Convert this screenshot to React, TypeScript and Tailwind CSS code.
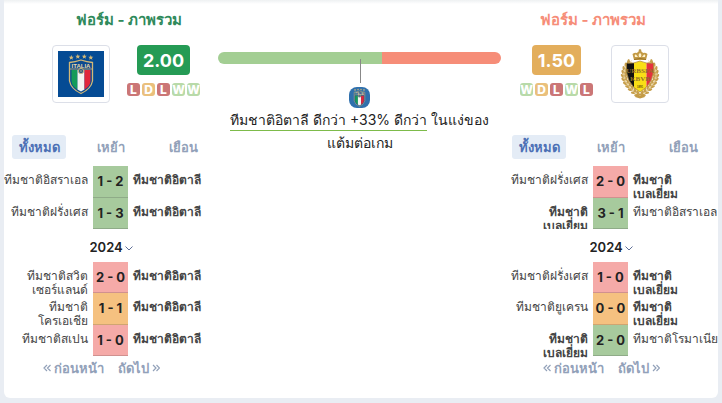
import { useState } from "react";

type Result = "W" | "D" | "L";
type Match = { home: string; away: string; score: string; result: Result; own: "home" | "away" };
type Team = {
  id: string;
  rating: string;
  ratingClass: string;
  titleClass: string;
  form: Result[];
  recent: Match[];
  older: Match[];
};

const ITALY = "ทีมชาติอิตาลี";
const BELGIUM = "ทีมชาติเบลเยี่ยม";

const teams: Record<"italy" | "belgium", Team> = {
  italy: {
    id: "italy",
    rating: "2.00",
    ratingClass: "bg-[#259b55]",
    titleClass: "text-[#2f8a5b]",
    form: ["L", "D", "L", "W", "W"],
    recent: [
      { home: "ทีมชาติอิสราเอล", away: ITALY, score: "1 - 2", result: "W", own: "away" },
      { home: "ทีมชาติฝรั่งเศส", away: ITALY, score: "1 - 3", result: "W", own: "away" },
    ],
    older: [
      { home: "ทีมชาติสวิตเซอร์แลนด์", away: ITALY, score: "2 - 0", result: "L", own: "away" },
      { home: "ทีมชาติโครเอเชีย", away: ITALY, score: "1 - 1", result: "D", own: "away" },
      { home: "ทีมชาติสเปน", away: ITALY, score: "1 - 0", result: "L", own: "away" },
    ],
  },
  belgium: {
    id: "belgium",
    rating: "1.50",
    ratingClass: "bg-[#e3ae5c]",
    titleClass: "text-[#f68d78]",
    form: ["W", "D", "L", "W", "L"],
    recent: [
      { home: "ทีมชาติฝรั่งเศส", away: BELGIUM, score: "2 - 0", result: "L", own: "away" },
      { home: BELGIUM, away: "ทีมชาติอิสราเอล", score: "3 - 1", result: "W", own: "home" },
    ],
    older: [
      { home: "ทีมชาติฝรั่งเศส", away: BELGIUM, score: "1 - 0", result: "L", own: "away" },
      { home: "ทีมชาติยูเครน", away: BELGIUM, score: "0 - 0", result: "D", own: "away" },
      { home: BELGIUM, away: "ทีมชาติโรมาเนีย", score: "2 - 0", result: "W", own: "home" },
    ],
  },
};

const badgeColor: Record<Result, string> = {
  W: "bg-[#b8daa9]",
  D: "bg-[#eac07c]",
  L: "bg-[#cb7676]",
};

const scoreColor: Record<Result, string> = {
  W: "bg-[#a7ca9d] border-[#8fab88]",
  D: "bg-[#f5c180] border-[#d0a571]",
  L: "bg-[#f5aaa8] border-[#d0918f]",
};

function ItalyShield() {
  return (
    <g>
      {[13, 19.5, 26, 32.5].map((x, i) => (
        <path
          key={x}
          transform={`translate(${x + 0.3} ${i === 0 || i === 3 ? 6.5 : 5.5})`}
          d="M0-2.5.7-.8 2.5-.7 1.1.5 1.6 2.3 0 1.2-1.6 2.3-1.1.5-2.5-.7-.7-.8Z"
          fill="#d3b876"
        />
      ))}
      <path d="M11.500 11.500Q17 11 23 9Q29 11 34.500 11.500V30Q33 38 23 42.500Q13 38 11.500 30Z" fill="#0b4a8f" stroke="#d3b876" strokeWidth="1.300" />
      <path d="M13.500 19H19.500V38.500Q14 35.500 13.500 30Z" fill="#159b59" />
      <path d="M19.500 19H26.500V38.500L23 40.500L19.500 38.500Z" fill="#f4f4f1" />
      <path d="M26.500 19H32.500V30Q32 35.500 26.500 38.500Z" fill="#e1263b" />
      <path d="M12 18H34" stroke="#d3b876" strokeWidth=".8" />
      <text x="23" y="17" textAnchor="middle" fontFamily="Liberation Sans, sans-serif" fontSize="6" fontWeight="700" fill="#ead9a8">
        ITALIA
      </text>
      <circle cx="23" cy="20" r="2.600" fill="#0b4a8f" stroke="#d3b876" strokeWidth=".9" />
      <path d="M21.500 20h3M23 18.500v3" stroke="#d3b876" strokeWidth=".6" />
    </g>
  );
}

function ItalyCrest() {
  return (
    <svg viewBox="0 0 46 46" className="size-[46px]" role="img" aria-label={ITALY}>
      <rect width="46" height="46" fill="#054b94" />
      <ItalyShield />
    </svg>
  );
}

const laurel = [
  [13, 13, -50], [10.5, 16, -35], [8.5, 19, -20], [7.5, 22.5, -8], [7, 26, 5], [7.5, 29.5, 15], [9, 33, 28], [11, 36, 38], [13.5, 39, 45], [16.5, 42, 52], [19.5, 44.5, 62],
];

function LaurelBranch() {
  return (
    <g>
      <path d="M13 12Q6 19 7 28Q9 39 23 46" fill="none" stroke="#b98f3d" strokeWidth="1.200" />
      {laurel.map(([x, y, a]) => (
        <g key={y} transform={`translate(${x} ${y}) rotate(${-a})`} fill="#c79f4c">
          <ellipse cx="-1.800" cy="0" rx="1.200" ry="2.400" transform="rotate(-30)" />
          <ellipse cx="1.800" cy="0" rx="1.200" ry="2.400" transform="rotate(30)" />
          <ellipse cx="0" cy="-1" rx=".6" ry="1.600" fill="#ecd9a6" />
        </g>
      ))}
    </g>
  );
}

const BELGIUM_SHIELD = "M9.500 14Q17 15 23 12Q29 15 36.500 14Q38.500 34 23 43Q7.500 34 9.500 14Z";

function BelgiumCrest() {
  return (
    <svg viewBox="0 0 46 50" className="h-[50px] w-[46px]" role="img" aria-label={BELGIUM}>
      <clipPath id="belgium-shield">
        <path d={BELGIUM_SHIELD} />
      </clipPath>
      <LaurelBranch />
      <g transform="translate(46 0) scale(-1 1)">
        <LaurelBranch />
      </g>
      <g clipPath="url(#belgium-shield)">
        <path d="M5 10H17V46H5Z" fill="#111" />
        <path d="M17 10H29.500V46H17Z" fill="#f9df16" />
        <path d="M29.500 10H41V46H29.500Z" fill="#e5313d" />
      </g>
      <path d={BELGIUM_SHIELD} fill="none" stroke="#b28d3b" strokeWidth=".8" />
      <g fontFamily="Liberation Serif, serif" fontWeight="700" textAnchor="middle" fill="#94722a">
        <text x="23" y="24" fontSize="7">URBSFA</text>
        <text x="23" y="32" fontSize="7">KBVB</text>
        <text x="23" y="39" fontSize="3" fill="#59400b">1895</text>
      </g>
      <path d="M17 11L15.500 5Q18 3 20 4Q21 2 23 2Q25 2 26 4Q28 3 30.500 5L29 11Z" fill="#c39a45" />
      <path d="M18 8Q17 5 19 5.500L21 8ZM22 8Q21 5 23 4Q25 5 24 8ZM28 8Q29 5 27 5.500L25 8Z" fill="#fff2cb" />
      <path d="M23 0V3M21.700 1.300H24.300" stroke="#b28d3b" />
      <path d="M17 10.500Q23 8.500 29 10.500" stroke="#8d6820" strokeWidth=".8" fill="none" />
      <path d="M20 45L23 46.500L26 45L28 48L23 49.500L18 48Z" fill="#c39a45" />
    </svg>
  );
}

function MiniItalyCrest() {
  return (
    <svg viewBox="0 0 46 46" className="size-[21px] rounded-lg" aria-hidden="true">
      <rect width="46" height="46" fill="#2f70ad" />
      <ItalyShield />
    </svg>
  );
}

function Chevron() {
  return (
    <svg viewBox="0 0 8 8" className="size-2" fill="none" stroke="#5f6f96" aria-hidden="true">
      <path d="M.5 2.500 4 6 7.500 2.500" />
    </svg>
  );
}

function DoubleChevron({ next = false }: { next?: boolean }) {
  return (
    <svg viewBox="0 0 8 8" className="size-2" fill="none" stroke="currentColor" strokeWidth="1.200" aria-hidden="true">
      <path d={next ? "M1 1 4 4 1 7M4.500 1 7.500 4 4.500 7" : "M4 1 1 4 4 7M7.500 1 4.500 4 7.500 7"} />
    </svg>
  );
}

const wrapped = ["เบลเยี่ยม", "โครเอเชีย", "เซอร์แลนด์"];

function TeamName({ name }: { name: string }) {
  const tail = wrapped.find((w) => name.endsWith(w));
  if (!tail) return <span className="whitespace-nowrap">{name}</span>;
  return (
    <span className="whitespace-nowrap">
      {name.slice(0, -tail.length)}
      <br />
      {tail}
    </span>
  );
}

function MatchTable({ matches, label, className }: { matches: Match[]; label: string; className: string }) {
  return (
    <table
      className={`w-full table-fixed border-separate border-spacing-0 text-xs leading-[14px] text-[#444] ${className}`}
      aria-label={label}
    >
      <colgroup>
        <col className="w-[89px]" />
        <col className="w-[35px]" />
        <col />
      </colgroup>
      <tbody>
        {matches.map((m, i) => (
          <tr key={i} className="align-top">
            <td className={`p-0 pr-[5px] text-right ${m.own === "home" ? "font-bold" : ""}`}>
              <div className="flex h-[31px] justify-end pt-[7px]">
                <TeamName name={m.home} />
              </div>
            </td>
            <td className={`border-b p-0 text-center align-middle text-[13px] font-bold text-[#222] ${scoreColor[m.result]}`}>
              {m.score}
            </td>
            <td className={`p-0 pl-[5px] ${m.own === "away" ? "font-bold" : ""}`}>
              <div className="h-[31px] pt-[7px]">
                <TeamName name={m.away} />
              </div>
            </td>
          </tr>
        ))}
      </tbody>
    </table>
  );
}

const tabs = ["ทั้งหมด", "เหย้า", "เยือน"];

function TeamPanel({ team, crestFirst }: { team: Team; crestFirst: boolean }) {
  const [tab, setTab] = useState(0);
  return (
    <section className="min-w-0">
      <h2 className={`pt-2.5 text-center text-[15px] leading-5 font-bold ${crestFirst ? "pl-9" : "pr-9"} ${team.titleClass}`}>
        ฟอร์ม - ภาพรวม
      </h2>
      <div className={`mt-[15px] flex h-[58px] justify-center ${crestFirst ? "gap-4 pl-[31px]" : "flex-row-reverse gap-[15px] pr-9"}`}>
        <div className="flex size-[58px] shrink-0 items-center justify-center rounded border border-[#dcdfe8] bg-white">
          {crestFirst ? <ItalyCrest /> : <BelgiumCrest />}
        </div>
        <div className={`flex flex-col items-center ${crestFirst ? "w-[75px]" : "w-[78px]"}`}>
          <div className={`flex h-[30px] items-center rounded px-1.5 text-[18px] font-bold text-white ${team.ratingClass}`}>
            {team.rating}
          </div>
          <div className="mt-2 flex gap-0.5">
            {team.form.map((r, i) => (
              <span key={i} className={`flex size-[13px] items-center justify-center rounded-[3px] text-xs leading-3 font-extrabold text-white ${badgeColor[r]}`}>
                {r}
              </span>
            ))}
          </div>
        </div>
      </div>
      <div role="tablist" className="mt-8 grid grid-cols-3 px-2 text-[13px] leading-6 font-bold">
        {tabs.map((t, i) => (
          <button
            key={t}
            role="tab"
            aria-selected={tab === i}
            onClick={() => setTab(i)}
            className={`h-6 w-[54px] rounded-[3px] ${i === 1 ? "justify-self-center" : i === 2 ? "justify-self-end" : ""} ${tab === i ? "bg-[#e4ecf6] text-[#4c70b5]" : "text-[#92a1b9]"}`}
          >
            {t}
          </button>
        ))}
      </div>
      <div className="mt-[7px] overflow-hidden">
        <MatchTable matches={team.recent} label="2025" className="h-[63px]" />
      </div>
      <div className="flex h-[33px] items-center justify-center gap-px pt-1">
        <select aria-label="2024" className="appearance-none bg-transparent text-[13px] font-semibold text-[#222]">
          <option>2024</option>
        </select>
        <Chevron />
      </div>
      <MatchTable matches={team.older} label="2024" className="h-[94px]" />
      <nav className="flex justify-center gap-3.5 pt-0.5 pr-5 text-[13px] leading-5 font-bold text-[#92a1b9]">
        <button className="flex items-center gap-[3px]">
          <DoubleChevron />
          ก่อนหน้า
        </button>
        <button className="flex items-center gap-[3px]">
          ถัดไป
          <DoubleChevron next />
        </button>
      </nav>
    </section>
  );
}

export default function App() {
  return (
    <div className="bg-[#e9edf3] px-1 pb-[5px] font-[Inter,'Noto_Sans',sans-serif]">
      <main className="grid grid-cols-[214fr_286fr_214fr] rounded-b-md bg-white bg-linear-to-b from-[#eef1f2] to-white to-1% pb-5">
        <TeamPanel team={teams.italy} crestFirst />
        <section className="pt-[52px] pr-[3px]">
          <div className="relative flex h-3">
            <div className="w-[58%] rounded-l-md bg-[#a3ce93]" />
            <div className="flex-1 rounded-r-md bg-[#f68d78]" />
            <div className="absolute top-[7px] left-1/2 h-6 w-px bg-[#888]" />
          </div>
          <div className="mt-[23px] flex justify-center">
            <MiniItalyCrest />
          </div>
          <p className="text-center text-sm leading-[23px] text-[#222]">
            <span className="border-b border-[#7dbb4a] pb-0.5">ทีมชาติอิตาลี ดีกว่า +33% ดีกว่า</span> ในแง่ของ
            <br />
            แต้มต่อเกม
          </p>
        </section>
        <TeamPanel team={teams.belgium} crestFirst={false} />
      </main>
    </div>
  );
}
